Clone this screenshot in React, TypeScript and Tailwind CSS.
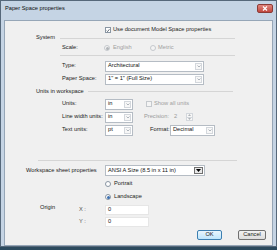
import React from "react";

type ComboProps = { value: string; w: string; active?: boolean };

function Combo({ value, w, active }: ComboProps) {
  return (
    <div className={`h-[11px] ${w} flex bg-white border border-[#b5bcc4]`}>
      <div className="flex-1 pl-[2px] flex items-center whitespace-nowrap overflow-hidden text-[#111]">
        {value}
      </div>
      {active ? (
        <div className="w-[9px] m-[1px] flex items-center justify-center border border-[#707070] bg-[#e8e8e8]">
          <svg width="5" height="3" viewBox="0 0 5 3">
            <path d="M0 0h5L2.5 3z" fill="#000" />
          </svg>
        </div>
      ) : (
        <div className="w-[7px] m-[1px] flex items-center justify-center border border-[#d3d7dc] bg-[#f7f7f7]">
          <svg width="4" height="3" viewBox="0 0 4 3">
            <path d="M0.5 0.5L2 2L3.5 0.5" fill="none" stroke="#9aa2ab" strokeWidth="0.8" />
          </svg>
        </div>
      )}
    </div>
  );
}

function Radio({ checked, disabled }: { checked?: boolean; disabled?: boolean }) {
  return (
    <div
      className={`w-[6px] h-[6px] rounded-full border flex items-center justify-center ${
        disabled ? "border-[#c5c9cd] bg-[#f4f4f4]" : "border-[#8a96a3] bg-white"
      }`}
    >
      {checked && (
        <div className={`w-[3px] h-[3px] rounded-full ${disabled ? "bg-[#b0b4b8]" : "bg-[#3b6fb0]"}`} />
      )}
    </div>
  );
}

function Check({ checked, disabled }: { checked?: boolean; disabled?: boolean }) {
  return (
    <div
      className={`w-[6px] h-[6px] border flex items-center justify-center ${
        disabled ? "border-[#c5c9cd] bg-[#f4f4f4]" : "border-[#8a96a3] bg-white"
      }`}
    >
      {checked && (
        <svg width="5" height="5" viewBox="0 0 5 5">
          <path d="M0.8 2.6L2 3.8L4.3 0.9" fill="none" stroke="#2b3a4a" strokeWidth="0.9" />
        </svg>
      )}
    </div>
  );
}

function Input({ value }: { value: string }) {
  return (
    <div className="w-[44px] h-[10px] bg-white border border-[#e6e6e6] pl-[2px] flex items-center text-[#1a1a1a]">
      {value}
    </div>
  );
}

export default function App() {
  return (
    <div className="w-[277px] h-[250px] bg-[#2c4a5e] font-['Liberation_Sans',Arial,sans-serif] text-[5.7px] leading-none text-[#1a1a1a]">
      <div className="w-[277px] h-[247px] flex flex-col bg-[#c5d4e4] border border-[#56687a]">
        {/* title bar */}
        <div className="h-[19px] flex items-start justify-between pl-[4px] pr-[3px] pt-[5px]">
          <span className="text-[#0c0c0c]">Paper Space properties</span>
          <div className="mt-[-2px] w-[16px] h-[9px] rounded-[2px] border border-[#8c3b36] bg-gradient-to-b from-[#e0867e] to-[#c0463d] flex items-center justify-center">
            <svg width="6" height="5" viewBox="0 0 6 5">
              <path d="M1 0.5L5 4.5M5 0.5L1 4.5" stroke="#fff" strokeWidth="1.2" />
            </svg>
          </div>
        </div>

        {/* client area */}
        <div className="flex-1 mx-[3px] bg-[#f0f0f0] border border-[#96a6b7] flex flex-col">
          <div className="h-[4px]" />
          <div className="h-[10px] flex items-center pl-[100px] gap-[2px]">
            <Check checked />
            <span>Use document Model Space properties</span>
          </div>

          <div className="h-[6px] flex items-center pl-[31px]">
            <span className="w-[24px]">System</span>
            <div className="w-[175px] h-px bg-[#d5d5d5]" />
          </div>
          <div className="h-[14px] flex items-center pl-[57px]">
            <span className="w-[42px]">Scale:</span>
            <div className="w-[46px] flex items-center gap-[3px] text-[#a0a0a0]">
              <Radio checked disabled />
              <span>English</span>
            </div>
            <div className="flex items-center gap-[2px] text-[#a0a0a0]">
              <Radio disabled />
              <span>Metric</span>
            </div>
          </div>
          <div className="ml-[55px] w-[175px] h-px bg-[#d5d5d5]" />

          <div className="h-[4px]" />
          <div className="h-[12px] flex items-center pl-[57px]">
            <span className="w-[43px]">Type:</span>
            <Combo value="Architectural" w="w-[99px]" />
          </div>
          <div className="h-px" />
          <div className="h-[12px] flex items-center pl-[57px]">
            <span className="w-[43px]">Paper Space:</span>
            <Combo value={'1" = 1" (Full Size)'} w="w-[99px]" />
          </div>

          <div className="h-[13px] flex items-center pl-[31px] pr-[39px] gap-[4px]">
            <span>Units in workspace</span>
            <div className="flex-1 h-px bg-[#d5d5d5]" />
          </div>
          <div className="h-[12px] flex items-center pl-[57px]">
            <span className="w-[43px]">Units:</span>
            <Combo value="in" w="w-[28px]" />
            <div className="ml-[13px] flex items-center gap-[2px] text-[#a0a0a0]">
              <Check disabled />
              <span>Show all units</span>
            </div>
          </div>
          <div className="h-px" />
          <div className="h-[12px] flex items-center pl-[57px]">
            <span className="w-[43px]">Line width units:</span>
            <Combo value="in" w="w-[28px]" />
            <span className="ml-[11px] w-[30px] text-[#9a9a9a]">Precision:</span>
            <span className="w-[12px] text-[#9a9a9a]">2</span>
            <div className="w-[7px] h-[8px] flex flex-col border border-[#d3d7dc] bg-[#f7f7f7]">
              <div className="flex-1 flex items-center justify-center border-b border-[#d3d7dc]">
                <svg width="3" height="2" viewBox="0 0 3 2">
                  <path d="M0 2h3L1.5 0z" fill="#b0b5ba" />
                </svg>
              </div>
              <div className="flex-1 flex items-center justify-center">
                <svg width="3" height="2" viewBox="0 0 3 2">
                  <path d="M0 0h3L1.5 2z" fill="#b0b5ba" />
                </svg>
              </div>
            </div>
          </div>
          <div className="h-px" />
          <div className="h-[12px] flex items-center pl-[57px]">
            <span className="w-[43px]">Text units:</span>
            <Combo value="pt" w="w-[28px]" />
            <span className="ml-[17px] w-[20px]">Format:</span>
            <Combo value="Decimal" w="w-[45px]" />
          </div>

          <div className="h-[24px]" />
          <div className="ml-[33px] w-[199px] h-px bg-[#d5d5d5]" />
          <div className="h-[4px]" />

          <div className="h-[11px] flex items-center pl-[21px]">
            <span className="w-[79px]">Workspace sheet properties</span>
            <Combo value="ANSI A Size (8.5 in x 11 in)" w="w-[100px]" active />
          </div>
          <div className="h-[2px]" />
          <div className="h-[12px] flex items-center pl-[100px] gap-[3px]">
            <Radio />
            <span>Portrait</span>
          </div>
          <div className="h-px" />
          <div className="h-[12px] flex items-center pl-[100px] gap-[3px]">
            <Radio checked />
            <span>Landscape</span>
          </div>
          <div className="h-[1px]" />
          <div className="h-[11px] flex items-center pl-[35px]">
            <span className="w-[39px] self-start pt-[1px]">Origin</span>
            <span className="w-[26px] text-[#555555]">X :</span>
            <Input value="0" />
          </div>
          <div className="h-[1px]" />
          <div className="h-[11px] flex items-center pl-[74px]">
            <span className="w-[26px] text-[#555555]">Y :</span>
            <Input value="0" />
          </div>

          <div className="h-[3px]" />
          <div className="h-[10px] flex items-center pl-[192px] gap-[16px]">
            <button className="w-[25px] h-[10px] flex items-center justify-center rounded-[2px] border border-[#3c7fb1] bg-gradient-to-b from-[#eaf6fd] to-[#bee6fd] text-[#1a1a1a]">
              OK
            </button>
            <button className="w-[28px] h-[10px] flex items-center justify-center rounded-[2px] border border-[#707070] bg-gradient-to-b from-[#f2f2f2] to-[#dddddd] text-[#1a1a1a]">
              Cancel
            </button>
          </div>
        </div>
      </div>
    </div>
  );
}
